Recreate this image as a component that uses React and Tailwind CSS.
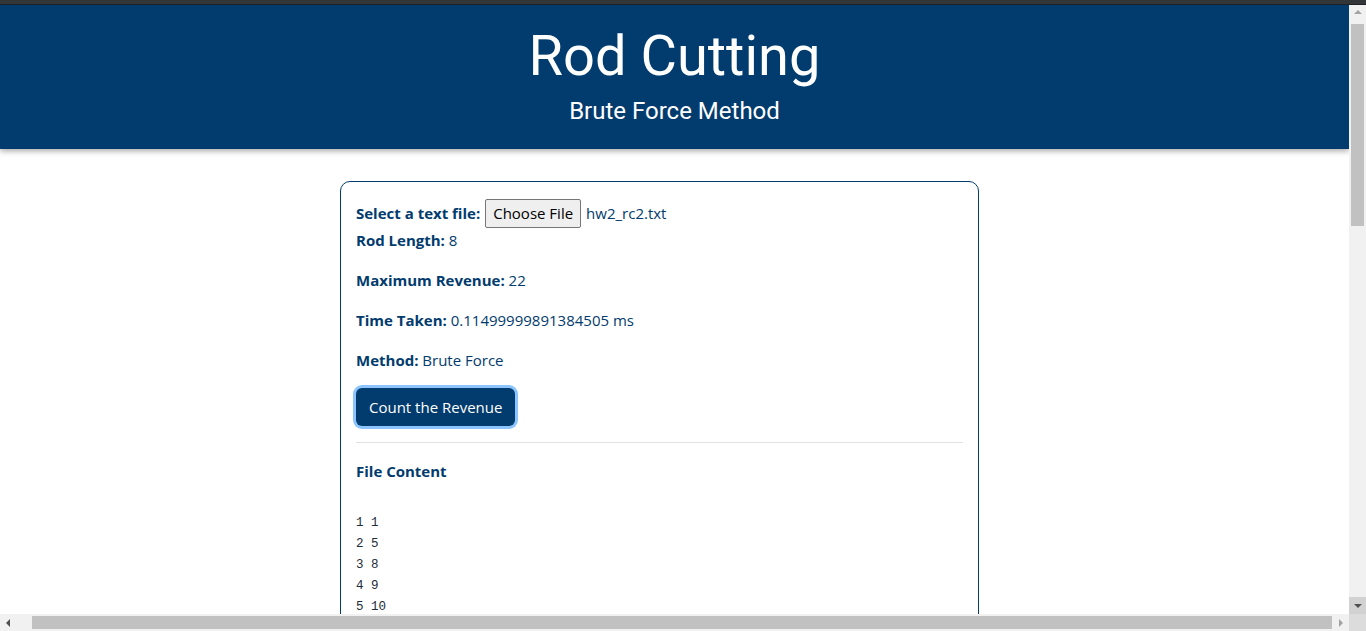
import React from 'react';

const ROWS = [
  { label: 'Maximum Revenue:', value: '22' },
  { label: 'Time Taken:', value: '0.11499999891384505 ms' },
  { label: 'Method:', value: 'Brute Force' },
];

const FILE_LINES = ['1 1', '2 5', '3 8', '4 9', '5 10'];

function VScrollbar() {
  return (
    <div className="w-[17px] bg-[#f1f1f1] flex flex-col items-center">
      <div className="h-[14px] w-full flex items-center justify-center">
        <div className="w-0 h-0 border-l-[4px] border-r-[4px] border-b-[4px] border-l-transparent border-r-transparent border-b-[#a3a3a3]" />
      </div>
      <div className="mt-[5px] w-[13px] h-[202px] bg-[#c1c1c1]" />
      <div className="flex-1" />
      <div className="h-[17px] w-full bg-[#d2d2d2] flex items-center justify-center">
        <div className="w-0 h-0 border-l-[4px] border-r-[4px] border-t-[4px] border-l-transparent border-r-transparent border-t-[#505050]" />
      </div>
    </div>
  );
}

function HScrollbar() {
  return (
    <div className="h-[17px] flex">
      <div className="flex-1 bg-[#f1f1f1] flex items-center">
        <div className="w-[16px] h-full flex items-center justify-center">
          <div className="w-0 h-0 border-t-[4px] border-b-[4px] border-r-[4px] border-t-transparent border-b-transparent border-r-[#505050]" />
        </div>
        <div className="ml-[16px] w-[1300px] h-[13px] bg-[#c1c1c1]" />
        <div className="flex-1 flex items-center justify-center">
          <div className="w-0 h-0 border-t-[4px] border-b-[4px] border-l-[4px] border-t-transparent border-b-transparent border-l-[#a3a3a3]" />
        </div>
      </div>
      <div className="w-[17px] bg-[#dcdcdc]" />
    </div>
  );
}

export default function App() {
  return (
    <div className="w-[1366px] h-[631px] flex flex-col overflow-hidden bg-white">
      <div className="h-[5px] bg-[#323639] border-b border-[#202124]" />
      <div className="flex flex-1 min-h-0">
        <div className="flex-1 overflow-hidden">
          {/* header */}
          <header className="relative z-10 h-[144px] bg-[#023b6d] shadow-[0_2px_6px_rgba(0,0,0,0.35)] flex flex-col items-center text-white font-['Roboto',sans-serif]">
            <h1 className="mt-[17px] text-[56px] leading-[68px]">Rod Cutting</h1>
            <p className="mt-[5px] text-[24px] leading-[32px]">Brute Force Method</p>
          </header>

          {/* card */}
          <div className="mt-[32px] ml-[340px] w-[639px] border border-[#023b6d] rounded-[10px] p-[15px] pt-[16px] text-[#023b6d] font-['Open_Sans',sans-serif] text-[15px]">
            <div className="h-[30px] flex items-center">
              <span className="font-bold">Select a text file:</span>
              <span className="ml-[5px] h-[29px] px-[7px] flex items-center border border-[#767676] rounded-[2px] bg-[#efefef] text-black">
                Choose File
              </span>
              <span className="ml-[5px]">hw2_rc2.txt</span>
            </div>
            <p className="leading-[24px]">
              <span className="font-bold">Rod Length:</span> 8
            </p>
            {ROWS.map((row) => (
              <p key={row.label} className="mt-[16px] leading-[24px]">
                <span className="font-bold">{row.label}</span> {row.value}
              </p>
            ))}
            <button className="mt-[16px] h-[38px] px-[13px] rounded-[6px] bg-[#023b6d] text-white leading-[24px] ring-[3px] ring-[#8cc4ff]">
              Count the Revenue
            </button>
            <hr className="mt-[16px] border-t border-[#e2e2e2]" />
            <h3 className="mt-[16px] font-bold leading-[24px]">File Content</h3>
            <pre className="mt-[30px] font-['Liberation_Mono',monospace] text-[12.5px] leading-[21px] text-[#1d2b3a]">
              {FILE_LINES.join('\n')}
            </pre>
          </div>
        </div>
        <VScrollbar />
      </div>
      <HScrollbar />
    </div>
  );
}
